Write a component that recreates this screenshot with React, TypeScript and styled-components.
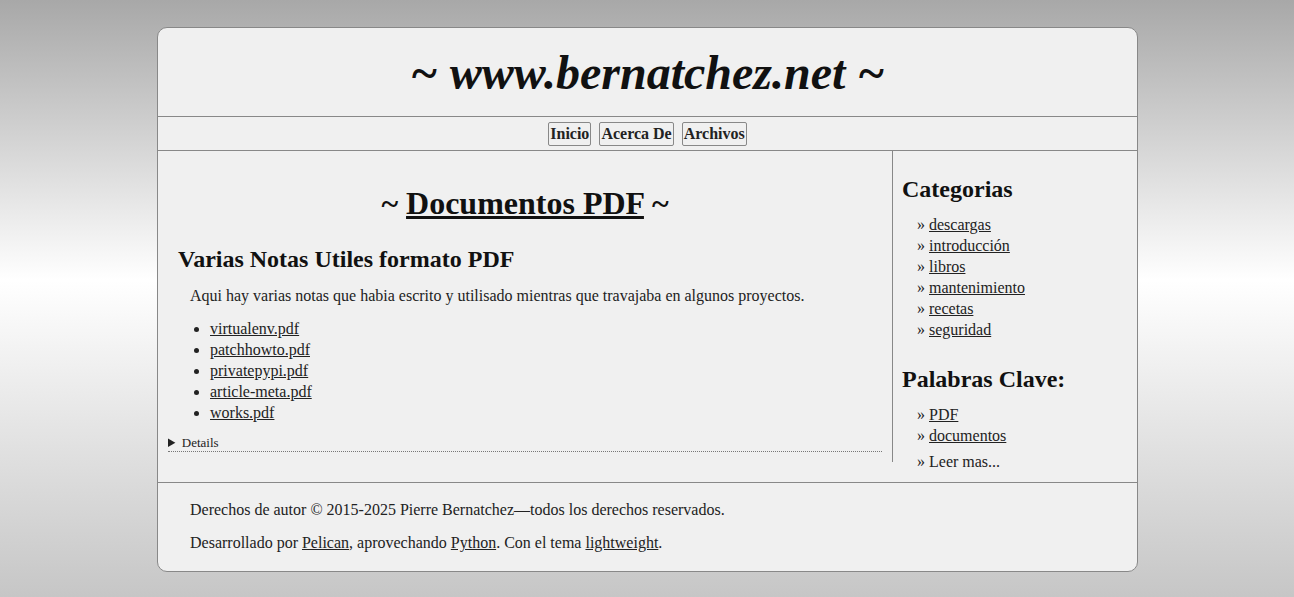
import * as React from "react";
import styled, { createGlobalStyle } from "styled-components";

const GlobalStyle = createGlobalStyle`
    html, body {
        margin: 0;
        padding: 0;
    }
    body {
        min-height: 597px;
        padding-left: 1px;
        background: linear-gradient(to bottom, #a8a8a8 0%, #ffffff 47%, #c6c6c6 100%);
        font-family: "Liberation Serif", "Times New Roman", serif;
        color: #222;
    }
    a {
        color: #222;
        text-decoration: underline;
    }
`;

// The rounded page box
const Page = styled.div`
    width: 979px;
    margin: 27px auto 0;
    background-color: #f0f0f0;
    border: 1px solid #888;
    border-radius: 10px;
    overflow: hidden;
`;

const Header = styled.header`
    height: 88px;
    display: flex;
    align-items: center;
    justify-content: center;
`;

const SiteTitle = styled.h1`
    margin: 0;
    font-size: 48px;
    font-weight: bold;
    font-style: italic;
    color: #111;
`;

const NavBar = styled.nav`
    height: 33px;
    border-top: 1px solid #888;
    border-bottom: 1px solid #888;
    display: flex;
    align-items: center;
    justify-content: center;
    gap: 8px;
`;

const NavButton = styled.a`
    display: inline-block;
    padding: 2px 1px;
    border: 1px solid #888;
    border-radius: 2px;
    font-size: 16px;
    font-weight: bold;
    line-height: 18px;
    text-decoration: none;
    color: #222;
`;

const Columns = styled.div`
    display: grid;
    grid-template-columns: 734px 1fr;
    align-items: start;
    padding-bottom: 20px;
    border-bottom: 1px solid #888;
`;

const Content = styled.main`
    padding: 0 10px 0 10px;
`;

const PageTitle = styled.h2`
    margin: 33px 0 0;
    text-align: center;
    font-size: 32px;
    font-weight: bold;
    line-height: 38px;
    color: #111;

    a {
        color: #111;
    }
`;

const ArticleTitle = styled.h3`
    margin: 23px 0 0 10px;
    font-size: 24px;
    font-weight: bold;
    line-height: 28px;
    color: #111;
`;

const Paragraph = styled.p`
    margin: 13px 0 0 22px;
    font-size: 16px;
    line-height: 20px;
`;

const FileList = styled.ul`
    margin: 12px 0 0;
    padding-left: 42px;
    font-size: 16px;
    line-height: 21px;
`;

const Details = styled.details`
    margin-top: 11px;
    border-bottom: 1px dotted #777;
    font-size: 13px;
    line-height: 17px;

    summary {
        cursor: pointer;
    }
`;

const Sidebar = styled.aside`
    border-left: 1px solid #888;
    padding: 24px 9px 0 9px;
`;

const SideTitle = styled.h2<{ $top?: number }>`
    margin: ${props => props.$top ?? 0}px 0 0;
    font-size: 24px;
    font-weight: bold;
    line-height: 28px;
    color: #111;
`;

const SideList = styled.ul<{ $last?: boolean }>`
    list-style: none;
    margin: 11px 0 ${props => props.$last ? -10 : 0}px;
    padding-left: 15px;
    font-size: 16px;
    line-height: 21px;
`;

const SideItem = styled.li<{ $gap?: number }>`
    margin-top: ${props => props.$gap ?? 0}px;
`;

const Footer = styled.footer`
    padding: 16px 32px 17px;
    font-size: 16px;
`;

const FooterLine = styled.p`
    margin: 0;
    line-height: 22px;

    & + & {
        margin-top: 11px;
    }
`;

const files = ["virtualenv.pdf", "patchhowto.pdf", "privatepypi.pdf", "article-meta.pdf", "works.pdf"];
const categories = ["descargas", "introducción", "libros", "mantenimiento", "recetas", "seguridad"];

const App = () => {
    return (
        <>
            <GlobalStyle />
            <Page>
                <Header>
                    <SiteTitle>~ www.bernatchez.net ~</SiteTitle>
                </Header>
                <NavBar>
                    <NavButton href="#">Inicio</NavButton>
                    <NavButton href="#">Acerca De</NavButton>
                    <NavButton href="#">Archivos</NavButton>
                </NavBar>
                <Columns>
                    <Content>
                        <PageTitle>~ <a href="#">Documentos PDF</a> ~</PageTitle>
                        <ArticleTitle>Varias Notas Utiles formato PDF</ArticleTitle>
                        <Paragraph>
                            Aqui hay varias notas que habia escrito y utilisado mientras que travajaba en algunos proyectos.
                        </Paragraph>
                        <FileList>
                            {files.map(f => (
                                <li key={f}><a href="#">{f}</a></li>
                            ))}
                        </FileList>
                        <Details>
                            <summary>Details</summary>
                        </Details>
                    </Content>
                    <Sidebar>
                        <SideTitle>Categorias</SideTitle>
                        <SideList>
                            {categories.map(c => (
                                <li key={c}>» <a href="#">{c}</a></li>
                            ))}
                        </SideList>
                        <SideTitle $top={25}>Palabras Clave:</SideTitle>
                        <SideList $last>
                            <li>» <a href="#">PDF</a></li>
                            <li>» <a href="#">documentos</a></li>
                            <SideItem $gap={5}>» Leer mas...</SideItem>
                        </SideList>
                    </Sidebar>
                </Columns>
                <Footer>
                    <FooterLine>Derechos de autor © 2015-2025 Pierre Bernatchez—todos los derechos reservados.</FooterLine>
                    <FooterLine>
                        Desarrollado por <a href="#">Pelican</a>, aprovechando <a href="#">Python</a>. Con el tema <a href="#">lightweight</a>.
                    </FooterLine>
                </Footer>
            </Page>
        </>
    );
};

export default App;
